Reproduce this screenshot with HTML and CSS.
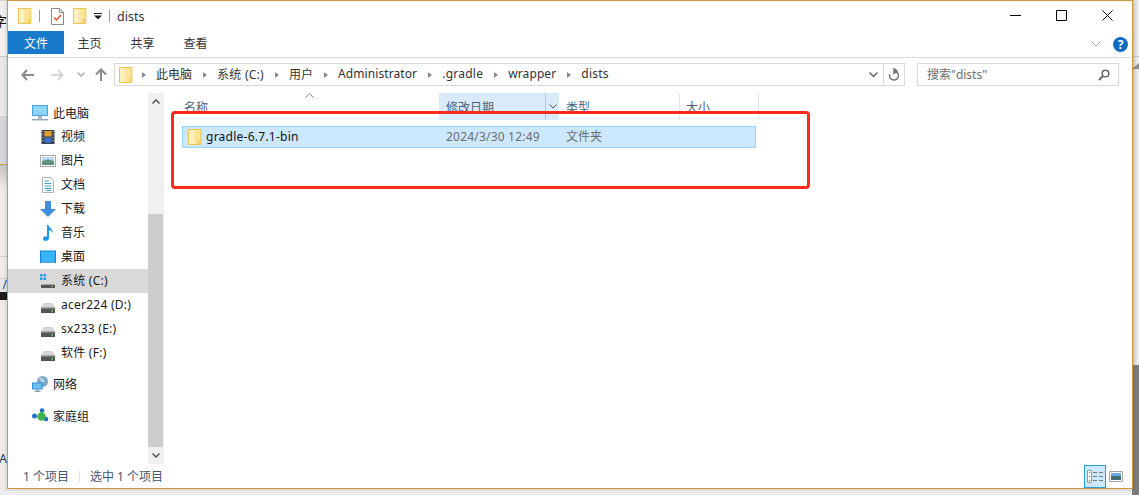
FILE: index.html
```html
<!DOCTYPE html>
<html lang="zh-CN">
<head>
<meta charset="utf-8">
<title>dists</title>
<link rel="stylesheet" href="styles.css">
</head>
<body>
<svg class="defs" width="0" height="0" aria-hidden="true">
  <symbol id="folder" viewBox="0 0 14 16">
    <path d="M.5.5h12.400v15H.5z" fill="#fde597" stroke="#e9c652"/>
    <path d="M1 1h5v14H1z" fill="#fef0bd"/>
    <path d="M10.500 15.500v-4h2.400" fill="none" stroke="#e9c652"/>
  </symbol>
  <symbol id="drive" viewBox="0 0 14 10">
    <path d="M2.500 0h9L14 4.500H0z" fill="#d4d4d4"/>
    <path d="M0 4h14v6H0z" fill="#555"/>
    <path d="M0 4h14v1.500H0z" fill="#a8a8a8"/>
    <path d="M10 7h2v1.500h-2z" fill="#4ed34e"/>
  </symbol>
</svg>
<div class="desktop">
  <div class="bg bg-left">
    <div class="bg-a"><span class="bg-char">字</span></div>
    <div class="bg-b"></div>
    <div class="bg-c"></div>
    <div class="bg-d"></div>
    <div class="bg-e"></div>
    <div class="bg-f"><span class="bg-slash">/</span></div>
    <div class="bg-g"><span class="bg-tail">/A</span></div>
  </div>
  <div class="bg bg-right">
    <div class="bgr-a"></div>
    <div class="bgr-tri"></div>
    <div class="bgr-b"></div>
    <div class="bgr-c"></div>
  </div>

  <div class="window">
    <div class="titlebar">
      <svg class="qa-folder"><use href="#folder"/></svg>
      <i class="qa-sep"></i>
      <svg class="qa-doc" viewBox="0 0 13 17">
        <path d="M.5.500h8l4 4v12H.5z" fill="#fff" stroke="#8a8a8a"/>
        <path d="M8.500.500v4h4" fill="none" stroke="#8a8a8a"/>
        <path d="M3 9.500l2.500 2.500L10 7" fill="none" stroke="#e0522a" stroke-width="1.500"/>
      </svg>
      <svg class="qa-folder2"><use href="#folder"/></svg>
      <svg class="qa-drop" viewBox="0 0 8 6"><path d="M0 0h8v1H0zM0 2.500h8L4 6.500z" fill="#222"/></svg>
      <i class="qa-sep qa-sep2"></i>
      <span class="title-text">dists</span>
      <div class="winbtns">
        <svg class="wb" viewBox="0 0 12 12"><path d="M0 5.500h11" stroke="#000" fill="none"/></svg>
        <svg class="wb" viewBox="0 0 12 12"><path d="M.5.500h10v10H.5z" stroke="#000" fill="none"/></svg>
        <svg class="wb" viewBox="0 0 12 12"><path d="M.5.500l10 10M10.500.500l-10 10" stroke="#000" fill="none"/></svg>
      </div>
    </div>

    <div class="ribbon">
      <div class="tab-file">文件</div>
      <div class="tab">主页</div>
      <div class="tab">共享</div>
      <div class="tab">查看</div>
      <svg class="rib-chev" viewBox="0 0 10 6"><path d="M.5.500L5 5l4.500-4.500" fill="none" stroke="#a8a8a8"/></svg>
      <div class="help">?</div>
    </div>

    <div class="addr-row">
      <div class="navbtns">
        <svg class="nb-back" viewBox="0 0 13 12"><path d="M6 1L1.500 6 6 11M2 6h11" fill="none" stroke="#8a8a8a" stroke-width="2"/></svg>
        <svg class="nb-fwd" viewBox="0 0 13 12"><path d="M7 1l4.500 5L7 11M11 6H0" fill="none" stroke="#d6d6d6" stroke-width="2"/></svg>
        <svg class="nb-chev" viewBox="0 0 8 5"><path d="M.5.500L4 4 7.500.500" fill="none" stroke="#a8a8a8" stroke-width="1.300"/></svg>
        <svg class="nb-up" viewBox="0 0 12 13"><path d="M1 6.500L6 1.500l5 5M6 2v11" fill="none" stroke="#8a8a8a" stroke-width="2"/></svg>
      </div>
      <div class="addr">
        <svg class="addr-folder"><use href="#folder"/></svg>
        <span class="sep"></span><span class="crumb">此电脑</span>
        <span class="sep"></span><span class="crumb wide">系统 (C:)</span>
        <span class="sep"></span><span class="crumb">用户</span>
        <span class="sep"></span><span class="crumb tight">Administrator</span>
        <span class="sep"></span><span class="crumb wide">.gradle</span>
        <span class="sep"></span><span class="crumb tight">wrapper</span>
        <span class="sep"></span><span class="crumb wide">dists</span>
        <svg class="addr-chev" viewBox="0 0 9 6"><path d="M.5.500L4.500 4.500 8.500.500" fill="none" stroke="#666" stroke-width="1.500"/></svg>
        <div class="refresh">
          <svg class="refresh-i" viewBox="0 0 12 13"><path d="M6 3a4.500 4.500 0 1 1-4.300 3.200M6 .5v5L9 3z" fill="none" stroke="#777" stroke-width="1.500"/></svg>
        </div>
      </div>
      <div class="search">
        <span class="search-text">搜索"dists"</span>
        <svg class="search-i" viewBox="0 0 12 12"><circle cx="7.500" cy="4.500" r="3.300" fill="none" stroke="#666" stroke-width="1.500"/><path d="M5 7l-4 4" stroke="#666" stroke-width="2"/></svg>
      </div>
    </div>

    <div class="main">
      <nav class="tree">
        <div class="row l1">
          <svg class="ico" viewBox="0 0 16 16"><path d="M0 0h16v11H0z" fill="#3fa5e8"/><path d="M1 1h14v9H1z" fill="#8fd4f7"/><path d="M6 11h4v3H6z" fill="#a9b9c4"/><path d="M0 14h16v1.500H0z" fill="#9aa9b4"/></svg>
          <span>此电脑</span>
        </div>
        <div class="row l2">
          <svg class="ico" viewBox="0 0 16 16"><path d="M1.500 1h13v14h-13z" fill="#3a3f4a"/><path d="M4.500 2h7v5.500h-7z" fill="#e0a030"/><path d="M4.500 8.500h7V14h-7z" fill="#3f6fc4"/><path d="M2.500 2h1v1h-1zM2.500 5h1v1h-1zM2.500 8h1v1h-1zM2.500 11h1v1h-1zM12.500 2h1v1h-1zM12.500 5h1v1h-1zM12.500 8h1v1h-1zM12.500 11h1v1h-1z" fill="#ddd"/></svg>
          <span>视频</span>
        </div>
        <div class="row l2">
          <svg class="ico" viewBox="0 0 16 16"><path d="M.5 2.500h15v11H.5z" fill="#fff" stroke="#a4a4a4"/><path d="M2 4h12v4H2z" fill="#bcd9ee"/><path d="M2 8l6-1.500L14 8v4H2z" fill="#5f8f80"/></svg>
          <span>图片</span>
        </div>
        <div class="row l2">
          <svg class="ico" viewBox="0 0 16 16"><path d="M2.500.500h8l3 3v12h-11z" fill="#fff" stroke="#a9b6c2"/><path d="M5 4h4M4.500 6.500h7M4.500 9h7M4.500 11.500h7M6 13.500h5" stroke="#3c9fd0" fill="none"/></svg>
          <span>文档</span>
        </div>
        <div class="row l2">
          <svg class="ico" viewBox="0 0 16 16"><path d="M5 0h6v8h5l-8 8-8-8h5z" fill="#3f8fdc"/></svg>
          <span>下载</span>
        </div>
        <div class="row l2">
          <svg class="ico" viewBox="0 0 16 16"><path d="M7 0h1.500c.5 3 4.500 3.500 4 8-.8-2-2.500-3-3.500-3v8c0 2-2 3-3.500 3S3 15 3 13.500 5 11 7 11.500z" fill="#1e9be8"/></svg>
          <span>音乐</span>
        </div>
        <div class="row l2">
          <svg class="ico" viewBox="0 0 16 16"><path d="M0 1.500h16V14H0z" fill="#0b86d9"/><path d="M1 2.500h14V12H1z" fill="#37b4f3"/><path d="M1 12.500h14v1H1z" fill="#8fd3f5"/></svg>
          <span>桌面</span>
        </div>
        <div class="row l2 selected">
          <svg class="ico" viewBox="0 0 16 16"><path d="M0 1h2.500v2.500H0zM3.500 1H6v2.500H3.500zM0 4.500h2.500V7H0zM3.500 4.500H6V7H3.500z" fill="#1aa0e8"/><path d="M3.500 8.500H12l3 3.500H1z" fill="#d8d8d8"/><path d="M1 11h14v4H1z" fill="#555"/><path d="M1 11h14v1H1z" fill="#a8a8a8"/><path d="M11 13h2v1h-2z" fill="#4ed34e"/></svg>
          <span class="lat">系统 (C:)</span>
        </div>
        <div class="row l2">
          <span class="drive-box"><svg class="drive"><use href="#drive"/></svg></span>
          <span class="lat">acer224 (D:)</span>
        </div>
        <div class="row l2">
          <span class="drive-box"><svg class="drive"><use href="#drive"/></svg></span>
          <span class="lat">sx233 (E:)</span>
        </div>
        <div class="row l2">
          <span class="drive-box"><svg class="drive"><use href="#drive"/></svg></span>
          <span class="lat">软件 (F:)</span>
        </div>
        <div class="row l1 net">
          <svg class="ico" viewBox="0 0 16 16"><circle cx="10.500" cy="5.500" r="5.500" fill="#7aa6c8"/><path d="M7 2c2-1 5 0 6 3l-3 2z" fill="#b5d4e6"/><path d="M0 6.500h10.500v7H0z" fill="#2e8fd8"/><path d="M1 7.500h8.500v5H1z" fill="#6cc0ef"/><path d="M4 13.500h3V15H4zM2.500 15h6v1h-6z" fill="#8da4b4"/></svg>
          <span>网络</span>
        </div>
        <div class="row l1 home">
          <svg class="ico" viewBox="0 0 16 16"><circle cx="2.500" cy="8" r="2.500" fill="#1f6fc0"/><circle cx="10" cy="2.500" r="2.300" fill="#1f6fc0"/><circle cx="14" cy="11" r="2.300" fill="#1f6fc0"/><circle cx="9.500" cy="8.500" r="4.300" fill="#3fb24a"/></svg>
          <span>家庭组</span>
        </div>
      </nav>

      <div class="vscroll">
        <div class="vs-btn"><svg class="vs-i" viewBox="0 0 8 5"><path d="M.5 4.500L4 1l3.500 3.500" fill="none" stroke="#555" stroke-width="1.500"/></svg></div>
        <div class="vs-gap"></div>
        <div class="vs-thumb"></div>
        <div class="vs-btn"><svg class="vs-i" viewBox="0 0 8 5"><path d="M.5.500L4 4 7.500.500" fill="none" stroke="#555" stroke-width="1.500"/></svg></div>
      </div>

      <div class="list">
        <div class="head">
          <div class="col col-name">名称<svg class="sort" viewBox="0 0 9 5"><path d="M.5 4.500L4.500.5l4 4" fill="none" stroke="#8a8a8a"/></svg></div>
          <div class="col col-date hot"><span class="col-label">修改日期</span><span class="split"><svg class="split-i" viewBox="0 0 8 5"><path d="M.5.500L4 4 7.500.500" fill="none" stroke="#555"/></svg></span></div>
          <div class="col col-type">类型</div>
          <div class="col col-size">大小</div>
        </div>
        <div class="item">
          <svg class="item-i"><use href="#folder"/></svg>
          <span class="item-name">gradle-6.7.1-bin</span>
          <span class="item-date">2024/3/30 12:49</span>
          <span class="item-type">文件夹</span>
        </div>
      </div>
    </div>

    <div class="status">
      <span class="st-a">1 个项目</span>
      <i class="st-sep"></i>
      <span class="st-b">选中 1 个项目</span>
      <div class="views">
        <div class="view-on">
          <svg class="view-i" viewBox="0 0 16 13"><path d="M.5.500h4v12h-4z" fill="#fff" stroke="#999"/><path d="M2 2h1v1H2zM2 6h1v1H2z" fill="#555"/><path d="M2 10h1v1H2z" fill="#e02020"/><path d="M6 2.500h4M12 2.500h4M6 6.500h4M12 6.500h4M6 10.500h4M12 10.500h4" stroke="#777"/></svg>
        </div>
        <svg class="view-large" viewBox="0 0 14 11"><path d="M.5.500h13v10H.5z" fill="#fff" stroke="#a4a4a4"/><path d="M2 2h10v3H2z" fill="#6aa9e8"/><path d="M2 5h10v4H2z" fill="#3f6f70"/></svg>
      </div>
    </div>

    <div class="mark"></div>
  </div>
</div>
</body>
</html>
```

FILE: styles.css
```css
* { box-sizing: border-box; }
html, body { margin: 0; padding: 0; }
body {
  font-family: "Noto Sans", "Noto Sans CJK SC", sans-serif;
  font-size: 12px;
  color: #1a1a1a;
  overflow: hidden;
}
svg { display: block; flex: none; }
.defs { position: absolute; }

.desktop {
  position: relative;
  width: 1139px;
  height: 495px;
  overflow: hidden;
  background: #eeeeee;
}

/* Background peeking out behind the window */
.bg { position: absolute; top: 0; height: 495px; width: 7px; display: flex; flex-direction: column; }
.bg-left { left: 0; }
.bg-right { left: 1132px; background: linear-gradient(90deg, #c8c8c8, #e4e4e4 60%, #eeeeee); }
.bg-a { height: 57px; background: #f0f0f0; border-top: 1px solid #d8d8d8; border-bottom: 1px solid #c8c8c8; position: relative; overflow: hidden; }
.bg-char { position: absolute; right: 0; top: 10px; font-size: 13px; color: #111; }
.bg-b { height: 60px; background: #e6e8ec; border-bottom: 1px solid #c8ccd2; }
.bg-c { height: 48px; background: #d3d6dc; border-bottom: 1px solid #d29a3e; }
.bg-d { height: 92px; background: linear-gradient(180deg, #c4c4c4, #ececec 24px); border-bottom: 1px solid #cfcfcf; }
.bg-e { height: 22px; background: #ececec; border-bottom: 1px solid #cfcfcf; }
.bg-f { height: 21px; background: #e6e6e6; border-bottom: 8px solid #1c1c1c; position: relative; overflow: hidden; }
.bg-slash { position: absolute; right: 0; top: -3px; font-size: 12px; color: #2a4a88; }
.bg-g { flex: 1; background: #ececec; position: relative; overflow: hidden; }
.bg-tail { position: absolute; right: 0; bottom: 28px; font-size: 12px; color: #2a3a58; }
.bgr-a { height: 57px; flex: none; border-bottom: 1px solid #c4c4c4; }
.bgr-tri { flex: none; width: 7px; height: 6px; margin-top: 6px; border-left: 7px solid transparent; border-bottom: 6px solid #888; }
.bgr-b { height: 296px; flex: none; }
.bgr-c { height: 130px; flex: none; background: #7c7c7c; border-radius: 2px 0 0 0; }

/* Window */
.window {
  position: absolute;
  left: 7px;
  top: 0;
  width: 1126px;
  height: 489px;
  display: flex;
  flex-direction: column;
  background: #fff;
  border: 1px solid #d29a3e;
  box-shadow: 0 0 4px rgba(0, 0, 0, .2);
}

/* Title bar */
.titlebar { height: 30px; display: flex; align-items: center; padding-left: 10px; flex: none; }
.qa-folder { width: 14px; height: 16px; }
.qa-sep { width: 1px; height: 12px; background: #9a9a9a; margin-left: 7px; }
.qa-doc { width: 13px; height: 17px; margin-left: 11px; }
.qa-folder2 { width: 14px; height: 16px; margin-left: 9px; }
.qa-drop { width: 8px; height: 6px; margin-left: 7px; }
.qa-sep2 { margin-left: 7px; }
.title-text { margin-left: 7px; font-size: 12.5px; color: #333; }
.winbtns { margin-left: auto; display: flex; padding-right: 18px; gap: 34px; }
.wb { width: 12px; height: 12px; }

/* Ribbon */
.ribbon { height: 27px; flex: none; display: flex; align-items: flex-start; border-bottom: 1px solid #dadada; }
.tab-file { width: 56px; height: 23px; background: #1979ca; color: #fff; display: flex; align-items: center; justify-content: center; }
.tab { width: 53px; height: 23px; display: flex; align-items: center; justify-content: center; color: #333; }
.tab-file + .tab { margin-left: -1px; }
.rib-chev { width: 10px; height: 6px; margin: 10px 0 0 auto; }
.help { width: 15px; height: 15px; margin: 6px 4px 0 12px; border-radius: 50%; background: #0f6cc4; color: #fff; font-weight: 700; font-size: 12px; line-height: 15px; text-align: center; }

/* Address row */
.addr-row { height: 35px; flex: none; display: flex; align-items: flex-start; padding: 5px 12px 0 0; }
.navbtns { width: 106px; height: 23px; display: flex; align-items: center; padding-left: 13px; }
.nb-back { width: 13px; height: 12px; }
.nb-fwd { width: 13px; height: 12px; margin-left: 17px; }
.nb-chev { width: 8px; height: 5px; margin-left: 13px; }
.nb-up { width: 12px; height: 13px; margin-left: 10px; }
.addr { width: 791px; height: 23px; display: flex; align-items: center; border: 1px solid #d9d9d9; padding-left: 4px; color: #333; }
.addr-folder { width: 14px; height: 16px; }
.sep { width: 4px; height: 6px; margin: 0 10px 0 11px; border-left: 4px solid #8a8a8a; border-top: 3px solid transparent; border-bottom: 3px solid transparent; }
.addr-folder + .sep { margin-left: 9px; }
.crumb { padding-bottom: 2px; }
.wide { letter-spacing: .25px; }
.tight { letter-spacing: .1px; }
.addr-chev { width: 9px; height: 6px; margin-left: auto; margin-right: 5px; }
.refresh { width: 21px; height: 21px; border-left: 1px solid #d9d9d9; display: flex; align-items: center; justify-content: center; }
.refresh-i { width: 12px; height: 13px; }
.search { width: 202px; height: 23px; margin-left: 12px; display: flex; align-items: center; justify-content: space-between; border: 1px solid #d9d9d9; padding: 0 8px 0 9px; color: #6d6d6d; }
.search-text { padding-bottom: 2px; }
.search-i { width: 12px; height: 12px; }

/* Main area */
.main { flex: 1; min-height: 0; display: flex; }
.tree { width: 140px; flex: none; padding-top: 8px; }
.row { height: 24px; display: flex; align-items: center; gap: 5px; color: #1a1a1a; }
.l1 { padding-left: 24px; }
.l2 { padding-left: 32px; }
.l2 > span:last-child { padding-bottom: 2px; }
.lat { letter-spacing: .25px; }
.selected { background: #d9d9d9; }
.net { margin-top: 7px; }
.home { margin-top: 8px; }
.ico { width: 16px; height: 16px; }
.drive-box { width: 16px; height: 16px; display: flex; align-items: flex-end; justify-content: center; }
.drive { width: 14px; height: 10px; }

.vscroll { width: 16px; height: 371px; flex: none; display: flex; flex-direction: column; background: #f0f0f0; }
.vs-btn { height: 17px; flex: none; display: flex; align-items: center; justify-content: center; }
.vs-i { width: 8px; height: 5px; }
.vs-gap { height: 104px; flex: none; }
.vs-thumb { flex: 1; background: #cdcdcd; margin-right: 1px; }

.list { flex: 1; min-width: 0; padding-left: 8px; }
.head { height: 27px; display: flex; color: #4c607a; }
.col { height: 27px; display: flex; align-items: center; border-right: 1px solid #e5e5e5; position: relative; }
.col-name { width: 267px; padding-left: 12px; border-right: 0; }
.sort { position: absolute; left: 133px; top: 0; width: 9px; height: 5px; }
.col-date { width: 120px; padding-left: 7px; }
.hot { background: #d9ebf9; border-right: 0; }
.col-label { flex: 1; }
.split { width: 14px; height: 27px; border-left: 1px solid #b4c8d8; display: flex; align-items: center; justify-content: center; }
.split-i { width: 8px; height: 5px; }
.col-type { width: 121px; padding-left: 7px; }
.col-size { width: 79px; padding-left: 6px; }

.item { width: 574px; height: 22px; margin: 6px 0 0 10px; display: flex; align-items: center; padding-left: 5px; background: #cce8ff; border: 1px solid #99d1ff; }
.item-i { width: 14px; height: 16px; }
.item-name { width: 240px; margin-left: 4px; color: #111; letter-spacing: .25px; padding-bottom: 2px; }
.item-date { width: 120px; color: #6d6d6d; letter-spacing: .2px; padding-bottom: 2px; }
.item-type { color: #6d6d6d; padding-bottom: 2px; }

/* Status bar */
.status { height: 23px; flex: none; display: flex; align-items: center; padding-left: 15px; color: #44576c; }
.st-a, .st-b { padding-bottom: 2px; }
.st-sep { width: 1px; height: 12px; margin: 0 10px; background: #e5e5e5; }
.views { margin-left: auto; margin-right: 8px; display: flex; align-items: center; gap: 3px; }
.view-on { width: 22px; height: 23px; display: flex; align-items: center; justify-content: center; background: #cce8ff; border: 1px solid #26a0da; }
.view-i { width: 16px; height: 13px; }
.view-large { width: 14px; height: 11px; margin-right: 1px; }

/* Red annotation drawn over the screenshot */
.mark {
  position: absolute;
  left: 163px;
  top: 110px;
  width: 639px;
  height: 78px;
  border: 3px solid #fe2a1e;
  border-radius: 4px;
}
```
